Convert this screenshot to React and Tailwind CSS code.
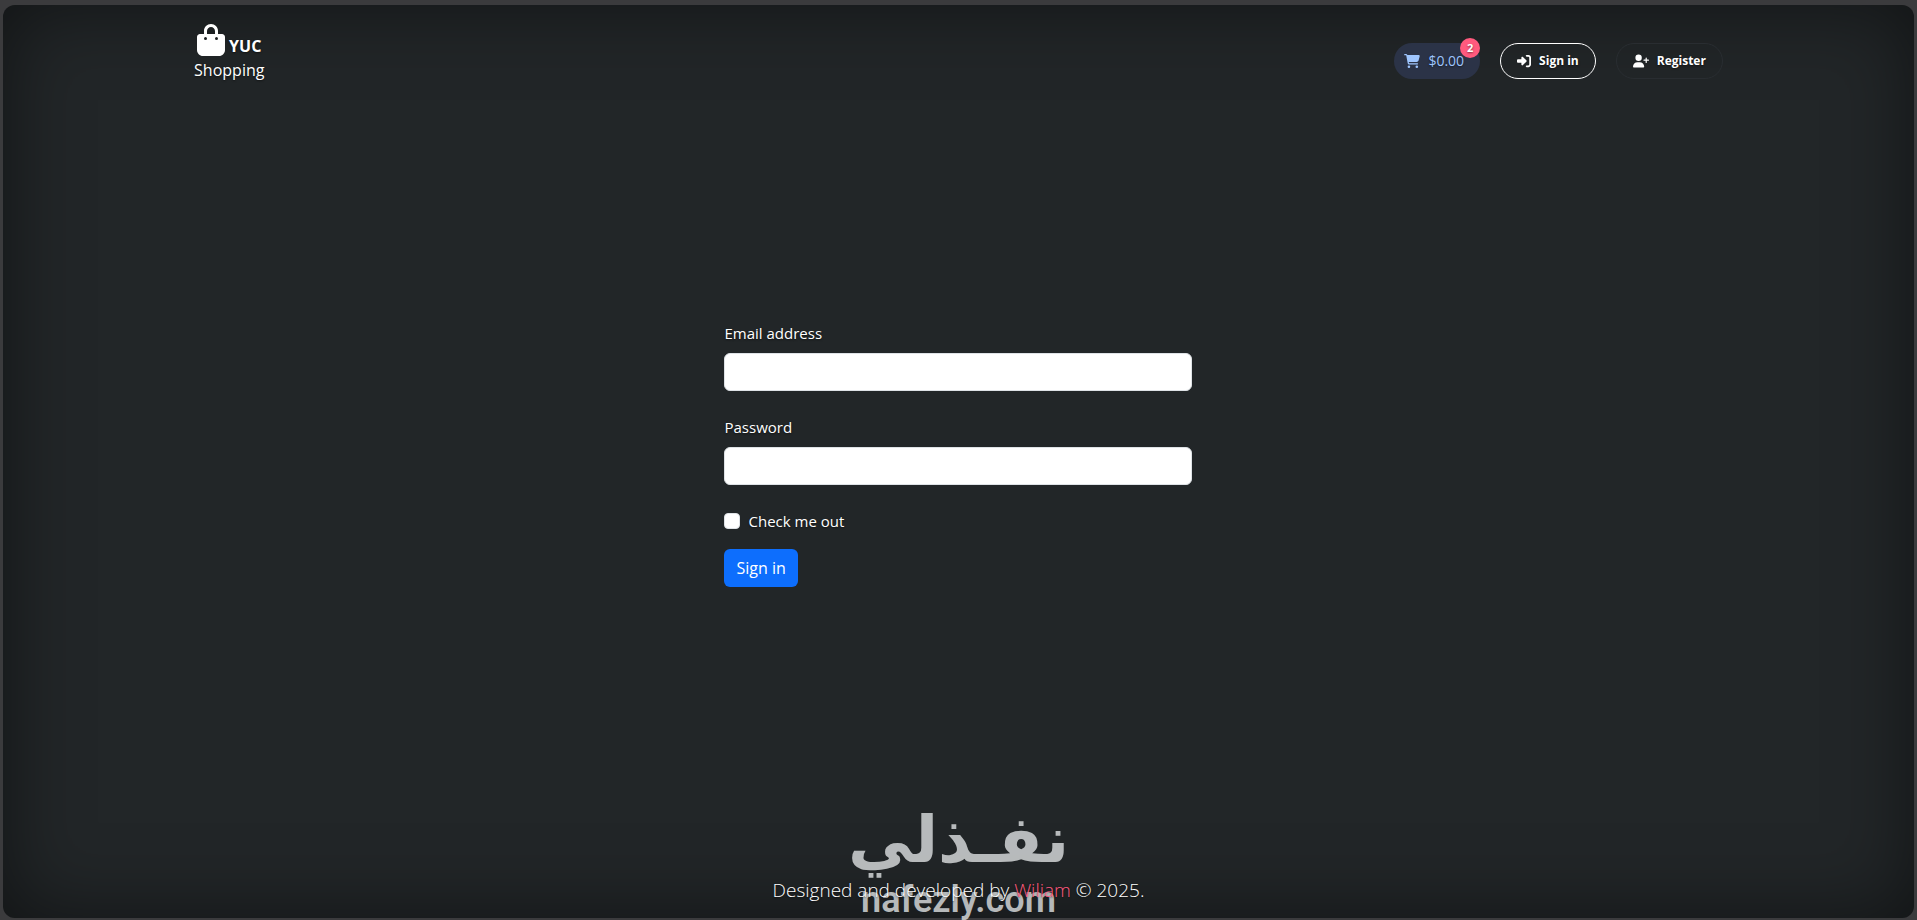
import {
  FaBagShopping,
  FaCartShopping,
  FaRightToBracket,
  FaUserPlus,
} from "react-icons/fa6";

const fields = [
  { id: "email", label: "Email address", type: "email" },
  { id: "password", label: "Password", type: "password" },
];

function Header() {
  return (
    <header className="flex items-end justify-between">
      <a href="#home" className="text-center leading-6">
        <span className="flex items-end justify-center gap-1">
          <FaBagShopping className="h-8 w-7" />
          <span className="text-base font-bold leading-5">YUC</span>
        </span>
        <span className="mt-0.5 block text-base">Shopping</span>
      </a>

      <nav className="flex items-center pb-[3px]">
        <a
          href="#cart"
          className="relative mr-5 flex h-9 items-center gap-2 rounded-full bg-[#2b3347] pl-2.5 pr-4 text-[#9ec5fe]"
        >
          <FaCartShopping className="h-3.5 w-4" />
          <span className="text-sm">$0.00</span>
          <span className="absolute -top-[5px] right-0 flex size-5 items-center justify-center rounded-full bg-[#ff5a7e] text-[11px] font-bold text-white">
            2
          </span>
        </a>
        <button
          type="button"
          className="mr-5 flex h-9 items-center gap-2 rounded-full border border-white px-4 text-xs font-bold text-shadow-[0_1px_2px_rgba(0,0,0,0.5)]"
        >
          <FaRightToBracket className="size-3.5" />
          Sign in
        </button>
        <button
          type="button"
          className="flex h-9 items-center gap-2 rounded-full border border-[#292d31] px-4 text-xs font-bold text-shadow-[0_1px_2px_rgba(0,0,0,0.5)]"
        >
          <FaUserPlus className="h-3.5 w-4" />
          Register
        </button>
      </nav>
    </header>
  );
}

function SignInForm() {
  return (
    <form className="w-[468px]" onSubmit={(e) => e.preventDefault()}>
      {fields.map(({ id, label, type }) => (
        <div key={id} className="mb-6">
          <label htmlFor={id} className="mb-2 block text-[15px] leading-6">
            {label}
          </label>
          <input
            id={id}
            type={type}
            className="block h-[38px] w-full rounded-md border border-[#dee2e6] bg-white px-3 text-[#212529]"
          />
        </div>
      ))}

      <div className="mb-4 flex items-center gap-2">
        <input
          id="check"
          type="checkbox"
          className="size-4 appearance-none rounded-sm border border-[#dee2e6] bg-white checked:bg-[#0d6efd]"
        />
        <label htmlFor="check" className="text-[15px] leading-6">
          Check me out
        </label>
      </div>

      <button
        type="submit"
        className="h-[38px] rounded-md bg-[#0d6efd] px-3 text-base"
      >
        Sign in
      </button>
    </form>
  );
}

function Watermark() {
  return (
    <div className="pointer-events-none absolute inset-x-0 bottom-0 flex flex-col items-center text-[#d2d5d6] opacity-85">
      <span
        lang="ar"
        dir="rtl"
        className="pb-1 font-['DejaVu_Sans',sans-serif] text-[65px] font-bold leading-[76px]"
      >
        نفـذلي
      </span>
      <span className="font-['Roboto',sans-serif] text-4xl font-semibold leading-9">
        nafezly.com
      </span>
    </div>
  );
}

export default function App() {
  return (
    <div className="flex min-h-screen bg-[#3b3b3d] px-[3px] pb-0.5 pt-[5px] font-['Open_Sans','Noto_Sans',sans-serif] text-white">
      <div className="relative flex flex-1 flex-col rounded-xl bg-[#222628] shadow-[inset_0_0_80px_rgba(0,0,0,0.5)]">
        <div className="mx-auto flex w-4/5 flex-1 flex-col pt-[19px] text-shadow-[0_1px_2px_rgba(0,0,0,0.5)]">
          <Header />
          <main className="flex flex-1 items-center justify-center pb-12">
            <SignInForm />
          </main>
          <footer className="relative z-10 pb-3 text-center text-[19px] font-light leading-8">
            Designed and developed by{" "}
            <a href="#author" className="text-[#ff5a7e]">
              Wiliam
            </a>{" "}
            © 2025.
          </footer>
        </div>
        <Watermark />
      </div>
    </div>
  );
}
